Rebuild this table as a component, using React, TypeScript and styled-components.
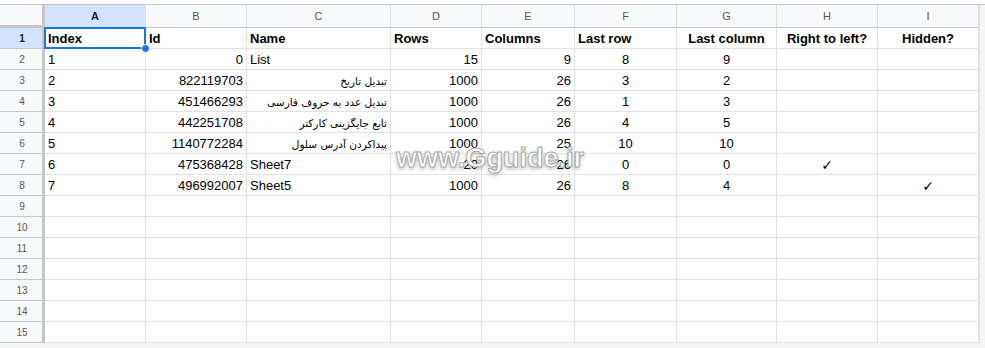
import { createGlobalStyle } from 'styled-components'
import styled from 'styled-components'

const GlobalStyle = createGlobalStyle`
  html, body {
    margin: 0;
    padding: 0;
    background: #ffffff;
    font-family: 'Liberation Sans', Arial, sans-serif;
  }
`

type Align = 'left' | 'right' | 'center'

const columns = [
  { letter: 'A', width: 101 },
  { letter: 'B', width: 101 },
  { letter: 'C', width: 144 },
  { letter: 'D', width: 91 },
  { letter: 'E', width: 93 },
  { letter: 'F', width: 102 },
  { letter: 'G', width: 100 },
  { letter: 'H', width: 101 },
  { letter: 'I', width: 101 },
]

const headerAlign: Align[] = ['left', 'left', 'left', 'left', 'left', 'left', 'center', 'center', 'center']
const dataAlign: Align[] = ['left', 'right', 'left', 'right', 'right', 'center', 'center', 'center', 'center']

const headers = ['Index', 'Id', 'Name', 'Rows', 'Columns', 'Last row', 'Last column', 'Right to left?', 'Hidden?']

const sheetRows: string[][] = [
  ['1', '0', 'List', '15', '9', '8', '9', '', ''],
  ['2', '822119703', 'تبدیل تاریخ', '1000', '26', '3', '2', '', ''],
  ['3', '451466293', 'تبدیل عدد به حروف فارسی', '1000', '26', '1', '3', '', ''],
  ['4', '442251708', 'تابع جایگزینی کارکتر', '1000', '26', '4', '5', '', ''],
  ['5', '1140772284', 'پیداکردن آدرس سلول', '1000', '25', '10', '10', '', ''],
  ['6', '475368428', 'Sheet7', '20', '26', '0', '0', '✓', ''],
  ['7', '496992007', 'Sheet5', '1000', '26', '8', '4', '', '✓'],
]

const TOTAL_ROWS = 15

const Page = styled.div`
  padding-top: 4px;
  background: #ffffff;
  width: 985px;
  height: 344px;
  overflow: hidden;
`

const Frame = styled.div`
  position: relative;
  display: flex;
  flex-direction: column;
  height: 344px;
  background: #f4f5f4;
  border-top: 1px solid #c7c7c7;
  box-sizing: border-box;
`

const Grid = styled.div`
  display: grid;
  grid-template-columns: 45px ${columns.map(c => `${c.width}px`).join(' ')};
  grid-template-rows: 23px repeat(${TOTAL_ROWS}, 21px);
  width: 979px;
  background: #ffffff;
  border-right: 1px solid #e2e2e2;
`

const Corner = styled.div`
  background: #f8f9fa;
  border-right: 3px solid #c4c7c5;
  border-bottom: 3px solid #c4c7c5;
  box-sizing: border-box;
`

const ColHeader = styled.div<{ $active?: boolean }>`
  display: flex;
  align-items: center;
  justify-content: center;
  box-sizing: border-box;
  background: ${({ $active }) => ($active ? '#d3e3fd' : '#f8f9fa')};
  border-right: 1px solid #e0e0e0;
  border-bottom: 1px solid #c4c7c5;
  font-size: 11px;
  font-weight: ${({ $active }) => ($active ? 'bold' : 'normal')};
  color: ${({ $active }) => ($active ? '#0b1f44' : '#575757')};
`

const RowHeader = styled.div<{ $active?: boolean }>`
  display: flex;
  align-items: center;
  justify-content: center;
  box-sizing: border-box;
  background: ${({ $active }) => ($active ? '#d3e3fd' : '#f8f9fa')};
  border-right: 3px solid #c4c7c5;
  border-bottom: 1px solid #c4c7c5;
  font-size: 10px;
  font-weight: ${({ $active }) => ($active ? 'bold' : 'normal')};
  color: ${({ $active }) => ($active ? '#0b1f44' : '#575757')};
  padding-left: 2px;
`

const Cell = styled.div<{ $align: Align; $bold?: boolean; $rtl?: boolean; $selected?: boolean }>`
  position: relative;
  box-sizing: border-box;
  border-right: 1px solid #e2e2e2;
  border-bottom: 1px solid #e2e2e2;
  padding: 1px 3px 0;
  line-height: 20px;
  white-space: nowrap;
  overflow: visible;
  font-size: ${({ $rtl }) => ($rtl ? '10.5px' : '13px')};
  font-family: ${({ $rtl }) =>
    $rtl ? "'DejaVu Sans', Tahoma, sans-serif" : "'Liberation Sans', Arial, sans-serif"};
  font-weight: ${({ $bold }) => ($bold ? 'bold' : 'normal')};
  text-align: ${({ $align, $rtl }) => ($rtl ? 'right' : $align)};
  direction: ${({ $rtl }) => ($rtl ? 'rtl' : 'ltr')};
  color: #000000;

  ${({ $selected }) =>
    $selected &&
    `
    &::after {
      content: '';
      position: absolute;
      left: -1px;
      top: -1px;
      right: -1px;
      bottom: -1px;
      border: 2px solid #1a73e8;
      pointer-events: none;
    }
  `}
`

const Check = styled.span`
  font-family: 'DejaVu Sans', sans-serif;
  font-size: 14px;
  font-weight: bold;
`

const FillHandle = styled.span`
  position: absolute;
  right: -5px;
  bottom: -5px;
  width: 7px;
  height: 7px;
  border-radius: 50%;
  background: #1a73e8;
  border: 1px solid #ffffff;
  z-index: 2;
`

const Watermark = styled.div`
  position: absolute;
  left: 396px;
  top: 140px;
  font-family: 'Liberation Sans', Arial, sans-serif;
  font-size: 27px;
  line-height: 27px;
  font-weight: bold;
  color: #ffffff;
  -webkit-text-stroke: 1px #a3a3a3;
  text-shadow: 0 2px 4px rgba(0, 0, 0, 0.35);
  opacity: 0.9;
  pointer-events: none;
`

const isRtl = (s: string) => /[\u0600-\u06FF]/.test(s)

const App = () => {
  const body: string[][] = [headers, ...sheetRows]
  while (body.length < TOTAL_ROWS) body.push(Array(9).fill(''))

  return (
    <Page>
      <GlobalStyle />
      <Frame>
        <Grid>
          <Corner />
          {columns.map((c, i) => (
            <ColHeader key={c.letter} $active={i === 0}>
              {c.letter}
            </ColHeader>
          ))}
          {body.map((row, r) => [
            <RowHeader key={`rh${r}`} $active={r === 0}>
              {r + 1}
            </RowHeader>,
            ...row.map((value, c) => (
              <Cell
                key={`${r}-${c}`}
                $align={r === 0 ? headerAlign[c] : dataAlign[c]}
                $bold={r === 0}
                $rtl={isRtl(value)}
                $selected={r === 0 && c === 0}
              >
                {value === '✓' ? <Check>{value}</Check> : value}
                {r === 0 && c === 0 && <FillHandle />}
              </Cell>
            )),
          ])}
        </Grid>
        <Watermark>www.Gguide.ir</Watermark>
      </Frame>
    </Page>
  )
}

export default App
